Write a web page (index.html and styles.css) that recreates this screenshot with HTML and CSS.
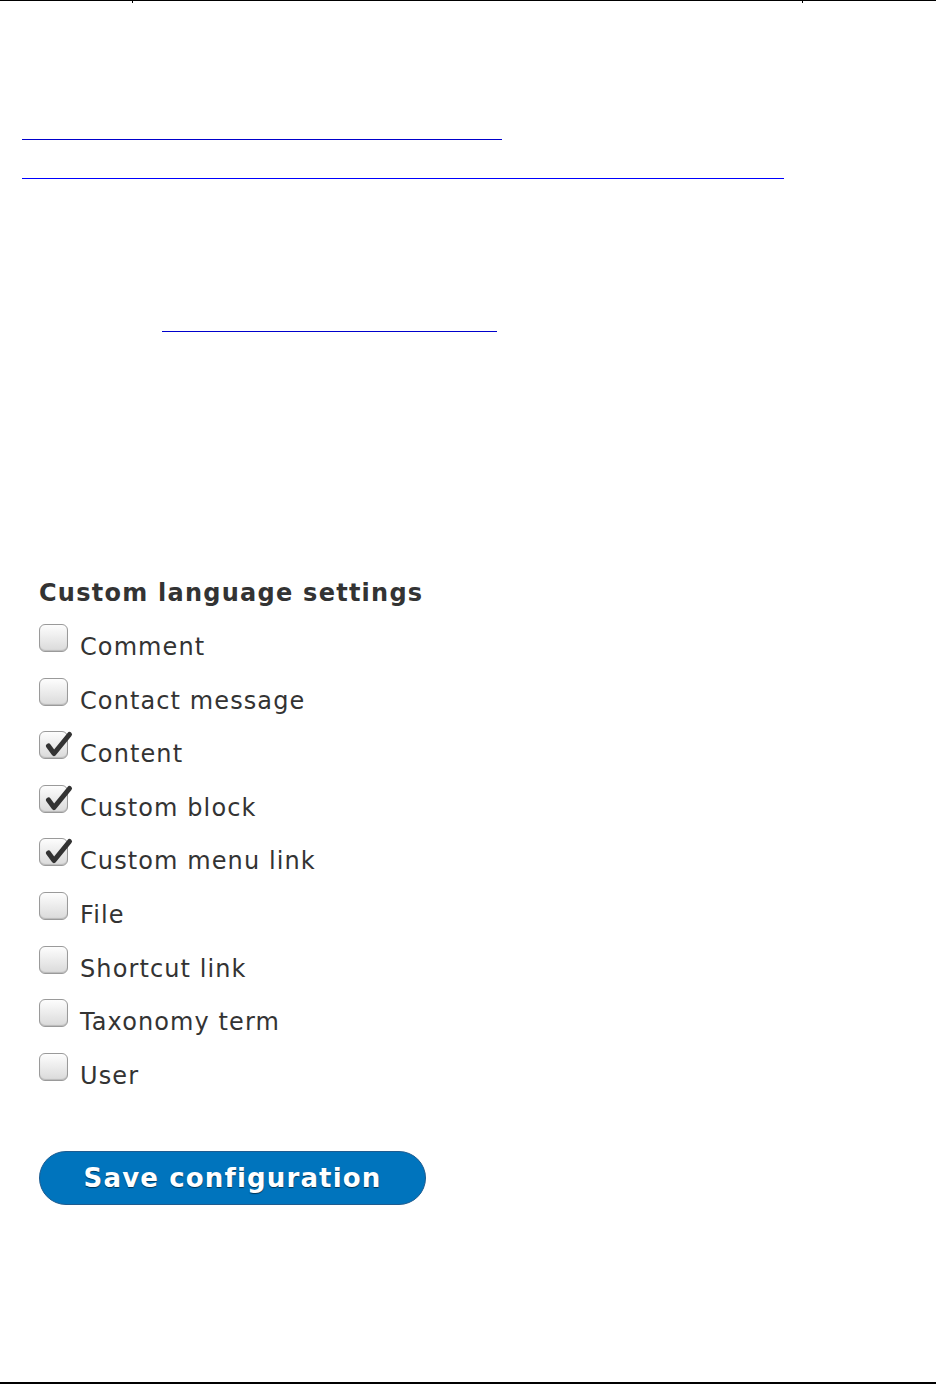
FILE: index.html
```html
<!DOCTYPE html>
<html lang="en">
<head>
<meta charset="utf-8">
<title>Content language</title>
<link rel="stylesheet" href="styles.css">
</head>
<body>
<div class="topbar">
  <div class="cell c1"></div>
  <div class="cell c2"></div>
  <div class="cell c3"></div>
</div>
<div class="links">
  <a class="ul ul1" href="#" aria-label="link"></a>
  <a class="ul ul2" href="#" aria-label="link"></a>
  <a class="ul ul3" href="#" aria-label="link"></a>
</div>
<form class="settings">
  <h3 class="title">Custom language settings</h3>
  <div class="options">
    <label class="opt"><span class="box"></span><span class="text">Comment</span></label>
    <label class="opt"><span class="box"></span><span class="text">Contact message</span></label>
    <label class="opt"><span class="box checked"><svg class="tick" viewBox="0 0 34 30" width="34" height="30"><path d="M9.5 15 L15 22.5 L30.5 3.5" fill="none" stroke="#333" stroke-width="5" stroke-linecap="round" stroke-linejoin="round"/></svg></span><span class="text">Content</span></label>
    <label class="opt"><span class="box checked"><svg class="tick" viewBox="0 0 34 30" width="34" height="30"><path d="M9.5 15 L15 22.5 L30.5 3.5" fill="none" stroke="#333" stroke-width="5" stroke-linecap="round" stroke-linejoin="round"/></svg></span><span class="text">Custom block</span></label>
    <label class="opt"><span class="box checked"><svg class="tick" viewBox="0 0 34 30" width="34" height="30"><path d="M9.5 15 L15 22.5 L30.5 3.5" fill="none" stroke="#333" stroke-width="5" stroke-linecap="round" stroke-linejoin="round"/></svg></span><span class="text">Custom menu link</span></label>
    <label class="opt"><span class="box"></span><span class="text">File</span></label>
    <label class="opt"><span class="box"></span><span class="text">Shortcut link</span></label>
    <label class="opt"><span class="box"></span><span class="text">Taxonomy term</span></label>
    <label class="opt"><span class="box"></span><span class="text">User</span></label>
  </div>
  <button type="button" class="save">Save configuration</button>
</form>
<div class="bottombar"></div>
</body>
</html>
```

FILE: styles.css
```css
html, body {
  margin: 0;
  padding: 0;
  background: #fff;
}
body {
  width: 936px;
  height: 1384px;
  font-family: "DejaVu Sans", "Liberation Sans", sans-serif;
  color: #333;
  display: flex;
  flex-direction: column;
}
.topbar {
  display: flex;
  height: 3px;
  border-top: 1px solid #000;
}
.cell { height: 2px; }
.c1 { width: 132px; }
.c2 { width: 669px; border-left: 1px solid #000; border-right: 1px solid #000; }
.c3 { flex: 1; }

.links {
  display: flex;
  flex-direction: column;
  align-items: flex-start;
}
.ul {
  display: block;
  height: 0;
  border-bottom: 1px solid #0000cc;
}
.ul1 { margin: 135px 0 0 22px; width: 480px; }
.ul2 { margin: 38px 0 0 22px; width: 762px; border-bottom-color: #0000ff; }
.ul3 { margin: 152px 0 0 162px; width: 335px; }

.settings {
  margin: 248px 0 0 39px;
  display: flex;
  flex-direction: column;
  align-items: flex-start;
}
.title {
  margin: 0;
  font-size: 24px;
  line-height: 27px;
  font-weight: bold;
  letter-spacing: 1.25px;
  color: #333;
}
.options {
  margin-top: 17px;
  display: flex;
  flex-direction: column;
}
.opt {
  display: flex;
  align-items: flex-start;
  height: 53.6px;
}
.box {
  position: relative;
  width: 27px;
  height: 26px;
  border: 1px solid #9a9a9a;
  border-radius: 6px;
  background: linear-gradient(#fdfdfd, #dadada);
  box-shadow: inset 0 -1px 1px rgba(0,0,0,0.15);
  flex: none;
}
.tick {
  position: absolute;
  left: -1px;
  top: -1px;
  overflow: visible;
}
.text {
  margin-left: 12px;
  padding-top: 9px;
  font-size: 24px;
  line-height: 28px;
  letter-spacing: 1.1px;
  color: #333;
}
.save {
  margin-top: 45px;
  width: 387px;
  height: 54px;
  border: 1px solid #1e5c90;
  border-radius: 27px;
  background: #0074bd;
  color: #fff;
  font-family: "DejaVu Sans", "Liberation Sans", sans-serif;
  font-weight: bold;
  font-size: 26px;
  letter-spacing: 1.15px;
  text-shadow: 0 1px 1px rgba(0,0,0,0.55);
  padding: 0;
  cursor: pointer;
}
.bottombar {
  margin-top: auto;
  height: 2px;
  background: #000;
}
```
